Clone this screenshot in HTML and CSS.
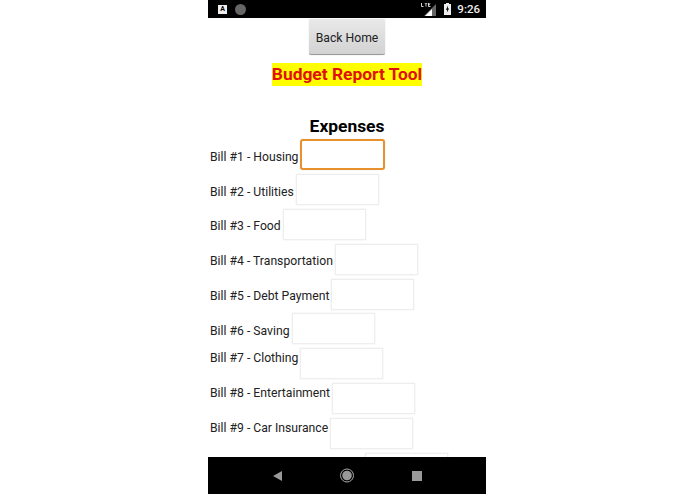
FILE: index.html
```html
<!DOCTYPE html>
<html lang="en">
  <head>
    <meta charset="UTF-8" />
    <meta name="viewport" content="width=device-width, initial-scale=1.0" />
    <title>Budget Report Tool</title>
    <link rel="stylesheet" href="styles.css">
  </head>
  <body>
    <div class="phone">
      <div class="status-bar">
        <span class="badge-a">A</span>
        <span class="dot"></span>
        <span class="status-right">
          <svg class="signal" width="16" height="13" viewBox="0 0 16 13">
            <path d="M15 1V13H3Z" fill="#666" />
            <path d="M11 6V13H4Z" fill="#fff" />
            <path d="M0.5 0V3.5H2.5M3.5 0H6.5M5 0V3.5M9.5 0H7.5V3.5H9.5M7.5 1.7H9" fill="none" stroke="#fff" stroke-width="0.8" />
          </svg>
          <svg class="battery" width="7" height="12" viewBox="0 0 7 12">
            <path d="M2 0H5V1H7V12H0V1H2Z" fill="#eee" />
            <path d="M4.1 2.5L1.9 6.8H3.2L2.9 9.6L5.1 5.4H3.8Z" fill="#000" />
          </svg>
          <span class="clock">9:26</span>
        </span>
      </div>

      <div class="content">
        <div class="top">
          <button class="back-btn">Back Home</button>
          <h1><span class="title">Budget Report Tool</span></h1>
          <h2>Expenses</h2>
        </div>

        <div class="bill"><label>Bill #1 - Housing</label><input class="focused" type="text"></div>
        <div class="bill"><label>Bill #2 - Utilities</label><input type="text"></div>
        <div class="bill"><label>Bill #3 - Food</label><input type="text"></div>
        <div class="bill"><label>Bill #4 - Transportation</label><input type="text"></div>
        <div class="bill"><label>Bill #5 - Debt Payment</label><input type="text"></div>
        <div class="bill"><label>Bill #6 - Saving</label><input type="text"></div>
        <div class="bill raised"><label>Bill #7 - Clothing</label><input type="text"></div>
        <div class="bill raised"><label>Bill #8 - Entertainment</label><input type="text"></div>
        <div class="bill raised"><label>Bill #9 - Car Insurance</label><input type="text"></div>
        <div class="bill"><span class="spacer"></span><input type="text"></div>
      </div>

      <div class="nav-bar">
        <svg width="9" height="10" viewBox="0 0 9 10"><path d="M9 0V10L0 5Z" fill="#999" /></svg>
        <svg width="14" height="15" viewBox="0 0 14 15">
          <circle cx="7" cy="7.5" r="6.5" fill="none" stroke="#aaa" stroke-width="1" />
          <circle cx="7" cy="7.5" r="4.8" fill="#999" />
        </svg>
        <span class="nav-square"></span>
      </div>
    </div>
  </body>
</html>
```

FILE: styles.css
```css
body {
  font-family: Roboto, sans-serif;
  margin: 0;
  background: #fff;
  overflow: hidden;
}
.phone {
  width: 278px;
  height: 494px;
  margin-left: 208px;
  display: flex;
  flex-direction: column;
}
.status-bar {
  flex: 0 0 18px;
  background: #000;
  display: flex;
  align-items: center;
  padding: 0 6px 0 10px;
}
.badge-a {
  width: 9px;
  height: 9px;
  background: #eee;
  color: #000;
  font-size: 7px;
  font-weight: 700;
  line-height: 9px;
  text-align: center;
}
.dot {
  width: 11px;
  height: 11px;
  margin-left: 8px;
  border-radius: 50%;
  background: #666;
}
.status-right {
  margin-left: auto;
  display: flex;
  align-items: center;
}
.battery {
  margin-left: 7px;
}
.clock {
  margin-left: 6px;
  color: #eee;
  font-size: 11.5px;
  font-weight: 500;
}
.content {
  flex: 1;
  min-height: 0;
  overflow: hidden;
  padding: 1px 0 0 2px;
}
.top {
  margin-left: -2px;
  text-align: center;
}
.back-btn {
  display: block;
  width: 76px;
  height: 36px;
  margin: 0 auto;
  padding: 2px 0 0;
  border: 0;
  border-bottom: 1px solid #999;
  border-radius: 2px;
  background: linear-gradient(#e9e9e9, #d2d2d2);
  box-shadow: 0 0 1px #aaa;
  color: #222;
  font-family: Roboto, sans-serif;
  font-size: 12.2px;
}
h1 {
  margin: 8px 0 0;
  font-size: 17.4px;
  line-height: 23px;
  font-weight: 700;
}
.title {
  display: inline-block;
  background: #ff0;
  color: #e0100c;
}
h2 {
  margin: 30px 0 0;
  height: 21.5px;
  font-size: 17.4px;
  line-height: 21px;
  font-weight: 700;
  color: #000;
}
.bill {
  display: flex;
  align-items: center;
  height: 34.8px;
  font-size: 12.2px;
  color: #222;
}
.bill label {
  margin: 4px 2px 0 0;
}
.spacer {
  width: 155px;
}
.bill input {
  box-sizing: border-box;
  width: 83px;
  height: 31px;
  margin: 0;
  padding: 0;
  background: #fff;
  border: 1px solid #eee;
  border-radius: 1px;
  box-shadow: 0 0 1.5px #ddd;
  outline: none;
}
.bill input.focused {
  width: 85px;
  border: 2px solid #e8912c;
  border-radius: 3px;
}
.bill.raised label {
  margin: 0 2px 11px 0;
}
.nav-bar {
  flex: 0 0 37px;
  background: #000;
  display: flex;
  align-items: center;
  padding-left: 65px;
  gap: 58px;
}
.nav-square {
  width: 10px;
  height: 10px;
  background: #999;
}
```
